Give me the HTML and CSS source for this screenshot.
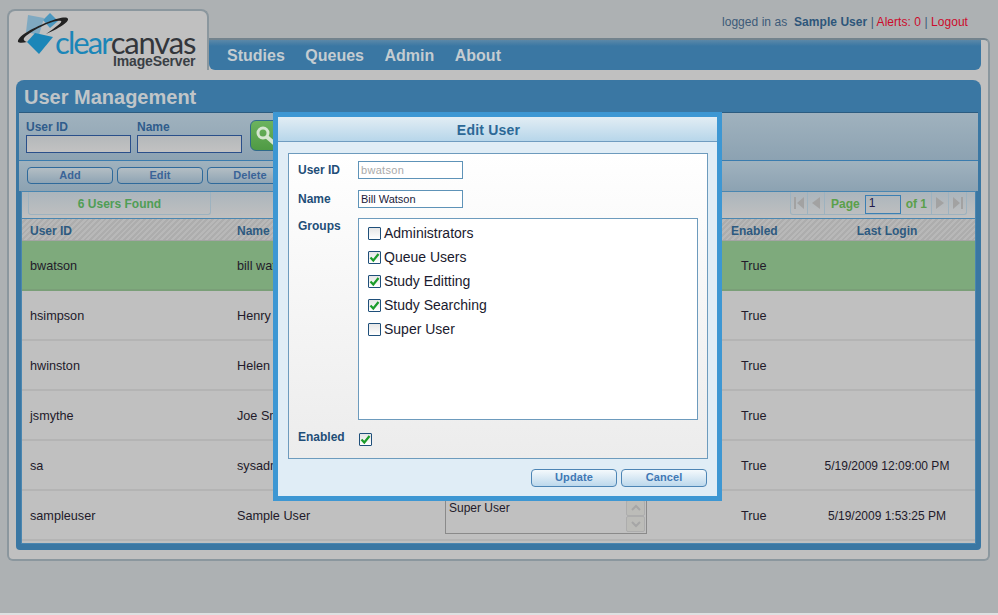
FILE: index.html
```html
<!DOCTYPE html>
<html lang="en">
<head>
    <meta charset="UTF-8">
    <title>User Management</title>
    <link rel="stylesheet" href="styles.css">
</head>
<body>
    <div class="page">
        <div class="header">
            <div class="logo-tab">
                <svg class="logo-icon" width="60" height="50" viewBox="15 12 60 50">
                    <polygon points="28,15 44,18 39,35 26,32" fill="#7fa9c1"/>
                    <polygon points="50,13 58,21 50,28 43,20" fill="#4a97bf"/>
                    <polygon points="27,42 35,33 53,37 39,54" fill="#1b86b8"/>
                    <path d="M18 42 C17 37 30 29 48 22 C58 18 67 16 68 19 C69 22 58 29 46 34 C56 27 63 22 61 21 C57 19 40 26 30 33 C24 37 21 40 27 42 C23 43 19 43 18 42 Z" fill="#222"/>
                </svg>
                <div class="logo-name"><span class="logo-clear">clear</span><span class="logo-canvas">canvas</span></div>
                <div class="logo-product">ImageServer</div>
            </div>
            <div class="header-right">
                <div class="login-line">
                    logged in as &nbsp;<b>Sample User</b> | <span class="alert">Alerts: 0</span> | <span class="alert">Logout</span>
                </div>
                <div class="nav-wrap">
                    <div class="nav">
                        <span>Studies</span>
                        <span>Queues</span>
                        <span>Admin</span>
                        <span>About</span>
                    </div>
                </div>
            </div>
        </div>

        <div class="shell">
            <div class="panel">
                <h1>User Management</h1>
                <div class="filter">
                    <div class="filter-field">
                        <label>User ID</label>
                        <div class="filter-input"></div>
                    </div>
                    <div class="filter-field">
                        <label>Name</label>
                        <div class="filter-input"></div>
                    </div>
                    <div class="search-btn">
                        <svg width="24" height="24" viewBox="0 0 24 24">
                            <circle cx="9" cy="9" r="5" fill="none" stroke="#d5e6d0" stroke-width="3"/>
                            <line x1="13" y1="13" x2="21" y2="20" stroke="#d5e6d0" stroke-width="4" stroke-linecap="round"/>
                        </svg>
                    </div>
                </div>
                <div class="toolbar">
                    <div class="tool-btn">Add</div>
                    <div class="tool-btn">Edit</div>
                    <div class="tool-btn">Delete</div>
                </div>
                <div class="grid">
                    <div class="pager-row">
                        <div class="found">6 Users Found</div>
                        <div class="pager">
                            <div class="pg-btn">
                                <svg width="12" height="14" viewBox="0 0 12 14"><path d="M1 1h2v12H1z M11 1v12L4 7z" fill="#a2a2a2"/></svg>
                            </div>
                            <div class="pg-btn">
                                <svg width="12" height="14" viewBox="0 0 12 14"><path d="M10 1v12L2 7z" fill="#a2a2a2"/></svg>
                            </div>
                            <div class="pg-info">
                                <span>Page</span>
                                <div class="pg-input">1</div>
                                <span>of 1</span>
                            </div>
                            <div class="pg-btn">
                                <svg width="12" height="14" viewBox="0 0 12 14"><path d="M2 1v12l8-6z" fill="#a2a2a2"/></svg>
                            </div>
                            <div class="pg-btn pg-last">
                                <svg width="12" height="14" viewBox="0 0 12 14"><path d="M1 1v12l7-6z M9 1h2v12H9z" fill="#a2a2a2"/></svg>
                            </div>
                        </div>
                    </div>
                    <div class="row head">
                        <div>User ID</div>
                        <div>Name</div>
                        <div></div>
                        <div>Enabled</div>
                        <div class="center">Last Login</div>
                    </div>
                    <div class="row selected">
                        <div>bwatson</div><div>bill watson</div><div></div><div class="enabled">True</div><div class="center"></div>
                    </div>
                    <div class="row">
                        <div>hsimpson</div><div>Henry Simpson</div><div></div><div class="enabled">True</div><div class="center"></div>
                    </div>
                    <div class="row">
                        <div>hwinston</div><div>Helen Winston</div><div></div><div class="enabled">True</div><div class="center"></div>
                    </div>
                    <div class="row">
                        <div>jsmythe</div><div>Joe Smythe</div><div></div><div class="enabled">True</div><div class="center"></div>
                    </div>
                    <div class="row">
                        <div>sa</div><div>sysadmin</div><div></div><div class="enabled">True</div><div class="center">5/19/2009 12:09:00 PM</div>
                    </div>
                    <div class="row">
                        <div>sampleuser</div><div>Sample User</div>
                        <div>
                            <div class="group-box">
                                <span>Super User</span>
                                <div class="group-scroll">
                                    <div class="scroll-btn"><svg width="12" height="8" viewBox="0 0 12 8"><path d="M2 6l4-4 4 4" fill="none" stroke="#a6a6a6" stroke-width="2"/></svg></div>
                                    <div class="scroll-btn"><svg width="12" height="8" viewBox="0 0 12 8"><path d="M2 2l4 4 4-4" fill="none" stroke="#a6a6a6" stroke-width="2"/></svg></div>
                                </div>
                            </div>
                        </div>
                        <div class="enabled">True</div><div class="center">5/19/2009 1:53:25 PM</div>
                    </div>
                </div>
            </div>
        </div>
    </div>

    <!-- Edit dialog -->
    <div class="modal">
        <div class="modal-title">Edit User</div>
        <div class="modal-body">
            <div class="form">
                <label class="form-label">User ID</label>
                <div class="form-input disabled">bwatson</div>
                <label class="form-label">Name</label>
                <div class="form-input">Bill Watson</div>
                <label class="form-label groups-label">Groups</label>
                <div class="groups">
                    <div class="check-row"><span class="cb"></span>Administrators</div>
                    <div class="check-row"><span class="cb"><svg width="11" height="11" viewBox="0 0 11 11"><path d="M1.5 5.5l2.8 3L9.5 2" fill="none" stroke="#1c9c2a" stroke-width="2.2"/></svg></span>Queue Users</div>
                    <div class="check-row"><span class="cb"><svg width="11" height="11" viewBox="0 0 11 11"><path d="M1.5 5.5l2.8 3L9.5 2" fill="none" stroke="#1c9c2a" stroke-width="2.2"/></svg></span>Study Editting</div>
                    <div class="check-row"><span class="cb"><svg width="11" height="11" viewBox="0 0 11 11"><path d="M1.5 5.5l2.8 3L9.5 2" fill="none" stroke="#1c9c2a" stroke-width="2.2"/></svg></span>Study Searching</div>
                    <div class="check-row"><span class="cb"></span>Super User</div>
                </div>
                <label class="form-label enabled-label">Enabled</label>
                <div class="enabled-check"><span class="cb"><svg width="11" height="11" viewBox="0 0 11 11"><path d="M1.5 5.5l2.8 3L9.5 2" fill="none" stroke="#1c9c2a" stroke-width="2.2"/></svg></span></div>
            </div>
            <div class="modal-buttons">
                <div class="modal-btn">Update</div>
                <div class="modal-btn">Cancel</div>
            </div>
        </div>
    </div>
</body>
</html>
```

FILE: styles.css
```css
html {
    background-color: #dfe1e2;
}
body {
    margin: 0;
    height: 613px;
    background-color: #adb1b3;
    font-family: "Liberation Sans", Arial, sans-serif;
    font-size: 12.67px;
    color: #221a2a;
    position: relative;
    overflow: hidden;
}
.page {
    padding: 9px 8px 0 7px;
}
.header {
    display: flex;
    height: 61px;
}
.logo-tab {
    width: 202px;
    box-sizing: border-box;
    flex-shrink: 0;
    position: relative;
    background-color: #c0c0c0;
    border: 2px solid #8b979e;
    border-bottom: none;
    border-radius: 8px 8px 0 0;
    padding: 20px 0 0 46px;
}
.logo-icon {
    position: absolute;
    left: 6px;
    top: 1px;
}
.logo-name {
    font-family: Lato, "Liberation Sans", sans-serif;
    font-size: 31px;
    line-height: 23px;
    white-space: nowrap;
}
.logo-clear {
    letter-spacing: -1.9px;
    color: #1b86b8;
}
.logo-canvas {
    letter-spacing: -1.2px;
    color: #33363b;
}
.logo-product {
    margin-left: 58px;
    font-weight: bold;
    font-size: 14px;
    line-height: 15px;
    letter-spacing: -0.15px;
    color: #3a3f45;
    white-space: nowrap;
}
.header-right {
    flex: 1;
    display: flex;
    flex-direction: column;
}
.login-line {
    height: 29px;
    padding-right: 22px;
    text-align: right;
    font-size: 12px;
    line-height: 27px;
    letter-spacing: 0.05px;
    color: #3c5a78;
}
.login-line b {
    color: #2d567a;
}
.alert {
    color: #cc0b2c;
}
.nav-wrap {
    flex: 1;
    background-color: #c0c0c0;
    border-top: 2px solid #73838d;
    border-right: 2px solid #8b979e;
    border-top-right-radius: 6px;
    padding-right: 7px;
}
.nav {
    height: 100%;
    display: flex;
    align-items: center;
    gap: 20.5px;
    padding: 1px 0 0 18px;
    box-sizing: border-box;
    background: linear-gradient(#5b88a8, #3a77a3 6px);
    border-radius: 0 0 6px 6px;
    font-size: 16px;
    font-weight: bold;
    color: #c4ccd1;
}
.shell {
    height: 491px;
    box-sizing: border-box;
    background-color: #c0c0c0;
    border: 2px solid #8b979e;
    border-top: none;
    border-radius: 0 0 6px 6px;
    padding: 10px 7px 9px;
}
.panel {
    height: 470px;
    box-sizing: border-box;
    background-color: #3a77a3;
    border-radius: 8px 8px 4px 4px;
    padding: 0 3px;
}
h1 {
    margin: 0;
    height: 32px;
    padding-left: 5px;
    font-size: 20px;
    line-height: 34px;
    color: #c0c5c8;
}
.filter {
    height: 48px;
    box-sizing: border-box;
    display: flex;
    align-items: flex-start;
    gap: 6px;
    padding: 7px 0 0 7px;
    border-top: 1px solid #2c5c80;
    background: linear-gradient(#a0b2be, #8ca2b2);
}
.filter-field label {
    display: block;
    font-size: 12px;
    font-weight: bold;
    line-height: 15px;
    color: #2f5c8c;
}
.filter-input {
    width: 105px;
    height: 18px;
    box-sizing: border-box;
    border: 1px solid #2a4f8a;
    background: linear-gradient(#b4b8ba, #c2c2c2);
}
.search-btn {
    width: 32px;
    height: 31px;
    margin: 0 0 0 2px;
    box-sizing: border-box;
    display: flex;
    align-items: center;
    justify-content: center;
    background: linear-gradient(#6cb35e, #4f9a44);
    border: 1px solid #2f6a8b;
    border-radius: 6px;
}
.toolbar {
    height: 31px;
    box-sizing: border-box;
    display: flex;
    gap: 4px;
    padding: 6px 0 0 8px;
    border-top: 1px solid #3a7cae;
    background: linear-gradient(#a0b2be, #8ca2b2);
}
.tool-btn {
    width: 86px;
    height: 17px;
    box-sizing: border-box;
    text-align: center;
    font-size: 11px;
    font-weight: bold;
    line-height: 15px;
    letter-spacing: 0.1px;
    color: #3a6498;
    border: 1px solid #2f6a9b;
    border-radius: 4px;
    background: linear-gradient(#b4bec4, #8ea4b4);
}
.grid {
    height: 353px;
    box-sizing: border-box;
    margin: 0 2px;
    border: 1px solid #4a86b0;
    background-color: #c0c0c0;
}
.pager-row {
    height: 27px;
    box-sizing: border-box;
    display: flex;
    justify-content: space-between;
    padding: 0 8px 0 6px;
    border-bottom: 1px solid #4a86b0;
    background: linear-gradient(#abb5bc, #c0c0c0);
}
.found {
    width: 183px;
    height: 23px;
    box-sizing: border-box;
    text-align: center;
    font-size: 12px;
    font-weight: bold;
    line-height: 24px;
    color: #4f9e55;
    border: 1px solid #9db2bf;
    border-top: none;
    border-radius: 0 0 3px 3px;
}
.pager {
    height: 23px;
    box-sizing: border-box;
    display: flex;
    align-items: center;
    border: 1px solid #9db2bf;
    border-top: none;
    border-radius: 0 0 3px 3px;
}
.pg-btn {
    width: 17px;
    height: 100%;
    box-sizing: border-box;
    display: flex;
    align-items: center;
    justify-content: center;
    border-right: 1px solid #9db2bf;
}
.pg-last {
    border-right: none;
}
.pg-info {
    width: 107px;
    height: 100%;
    display: flex;
    align-items: center;
    gap: 5px;
    padding: 2px 0 0 6px;
    box-sizing: border-box;
    border-right: 1px solid #9db2bf;
    font-size: 12px;
    font-weight: bold;
    color: #5aa04a;
}
.pg-input {
    width: 36px;
    height: 19px;
    box-sizing: border-box;
    padding-left: 3px;
    border: 1px solid #3b7fb3;
    font-weight: normal;
    line-height: 15px;
    color: #221a4a;
}
.row {
    height: 50px;
    box-sizing: border-box;
    display: grid;
    grid-template-columns: 207px 208px 286px 1fr 176px;
    align-items: center;
    padding-top: 2px;
    border-bottom: 2px solid #b4b4b4;
}
.row > div {
    padding-left: 8px;
}
.row > .center {
    padding-left: 0;
    text-align: center;
    font-size: 12px;
}
.row > .enabled {
    padding-left: 18px;
}
.head {
    height: 22px;
    border-bottom: 1px solid #a4a4a4;
    font-size: 12px;
    font-weight: bold;
    color: #2d5a80;
    background: repeating-linear-gradient(135deg, #b8b8b8 0 2px, #adadad 2px 4px);
}
.selected {
    background-color: #7eaa7c;
    border-bottom-color: #7a9f78;
}
.group-box {
    width: 202px;
    height: 38px;
    margin-top: -2px;
    box-sizing: border-box;
    position: relative;
    padding: 4px 0 0 3px;
    border: 1px solid #8a8a8a;
    font-size: 12px;
    line-height: 15px;
}
.group-scroll {
    position: absolute;
    top: 3px;
    right: 1px;
}
.scroll-btn {
    width: 19px;
    height: 16px;
    display: flex;
    align-items: center;
    justify-content: center;
    border: 1px solid #adadad;
    border-radius: 2px;
    box-sizing: border-box;
    background-color: #bcbcb8;
}

/* dialog sits over the page, so this one is placed by hand */
.modal {
    position: absolute;
    left: 273px;
    top: 112px;
    width: 449px;
    height: 389px;
    box-sizing: border-box;
    border: 5px solid #3d97d3;
    background-color: #e0edf6;
}
.modal-title {
    height: 25px;
    box-sizing: border-box;
    padding-right: 18px;
    text-align: center;
    font-size: 14px;
    font-weight: bold;
    line-height: 26px;
    letter-spacing: 0.2px;
    color: #2c6896;
    border-bottom: 1px solid #6f9cc0;
    background: linear-gradient(#e2edf4, #b7d6ea);
}
.modal-body {
    padding: 11px 9px 0 10px;
}
.form {
    height: 306px;
    box-sizing: border-box;
    display: grid;
    grid-template-columns: 60px 1fr;
    grid-template-rows: 18px 18px 201px auto;
    row-gap: 11px;
    padding: 7px 9px 0 9px;
    border: 1px solid #6d9bbd;
    background: linear-gradient(#ffffff, #ececec);
}
.form-label {
    font-size: 12px;
    font-weight: bold;
    line-height: 19px;
    color: #1f4e78;
}
.groups-label {
    line-height: 15px;
}
.form-input {
    width: 105px;
    box-sizing: border-box;
    padding-left: 2px;
    border: 1px solid #5e93b8;
    background-color: #fff;
    font-size: 11px;
    line-height: 16px;
    color: #1b1b3a;
}
.disabled {
    letter-spacing: 0.3px;
    color: #aaa;
}
.groups {
    box-sizing: border-box;
    margin-top: -1px;
    padding-top: 2px;
    border: 1px solid #6d9bbd;
    background-color: #fff;
}
.check-row {
    height: 24px;
    display: flex;
    align-items: center;
    gap: 3px;
    padding-left: 9px;
    font-size: 14px;
    color: #1a1a2e;
}
.cb {
    width: 13px;
    height: 13px;
    box-sizing: border-box;
    display: flex;
    align-items: center;
    justify-content: center;
    border: 1px solid #1f4f7a;
    border-radius: 1px;
    background: linear-gradient(#e6e6e6, #fff);
}
.enabled-label {
    margin-top: -1px;
    line-height: 15px;
}
.enabled-check {
    margin-top: 2px;
    padding-left: 1px;
}
.modal-buttons {
    display: flex;
    justify-content: flex-end;
    gap: 4px;
    padding: 10px 1px 0 0;
}
.modal-btn {
    width: 86px;
    height: 18px;
    box-sizing: border-box;
    text-align: center;
    font-size: 11px;
    font-weight: bold;
    line-height: 15px;
    letter-spacing: 0.1px;
    color: #3f78b5;
    border: 1px solid #4d85b5;
    border-radius: 4px;
    background: linear-gradient(#f4f9fc, #bcd8ec);
}
```
